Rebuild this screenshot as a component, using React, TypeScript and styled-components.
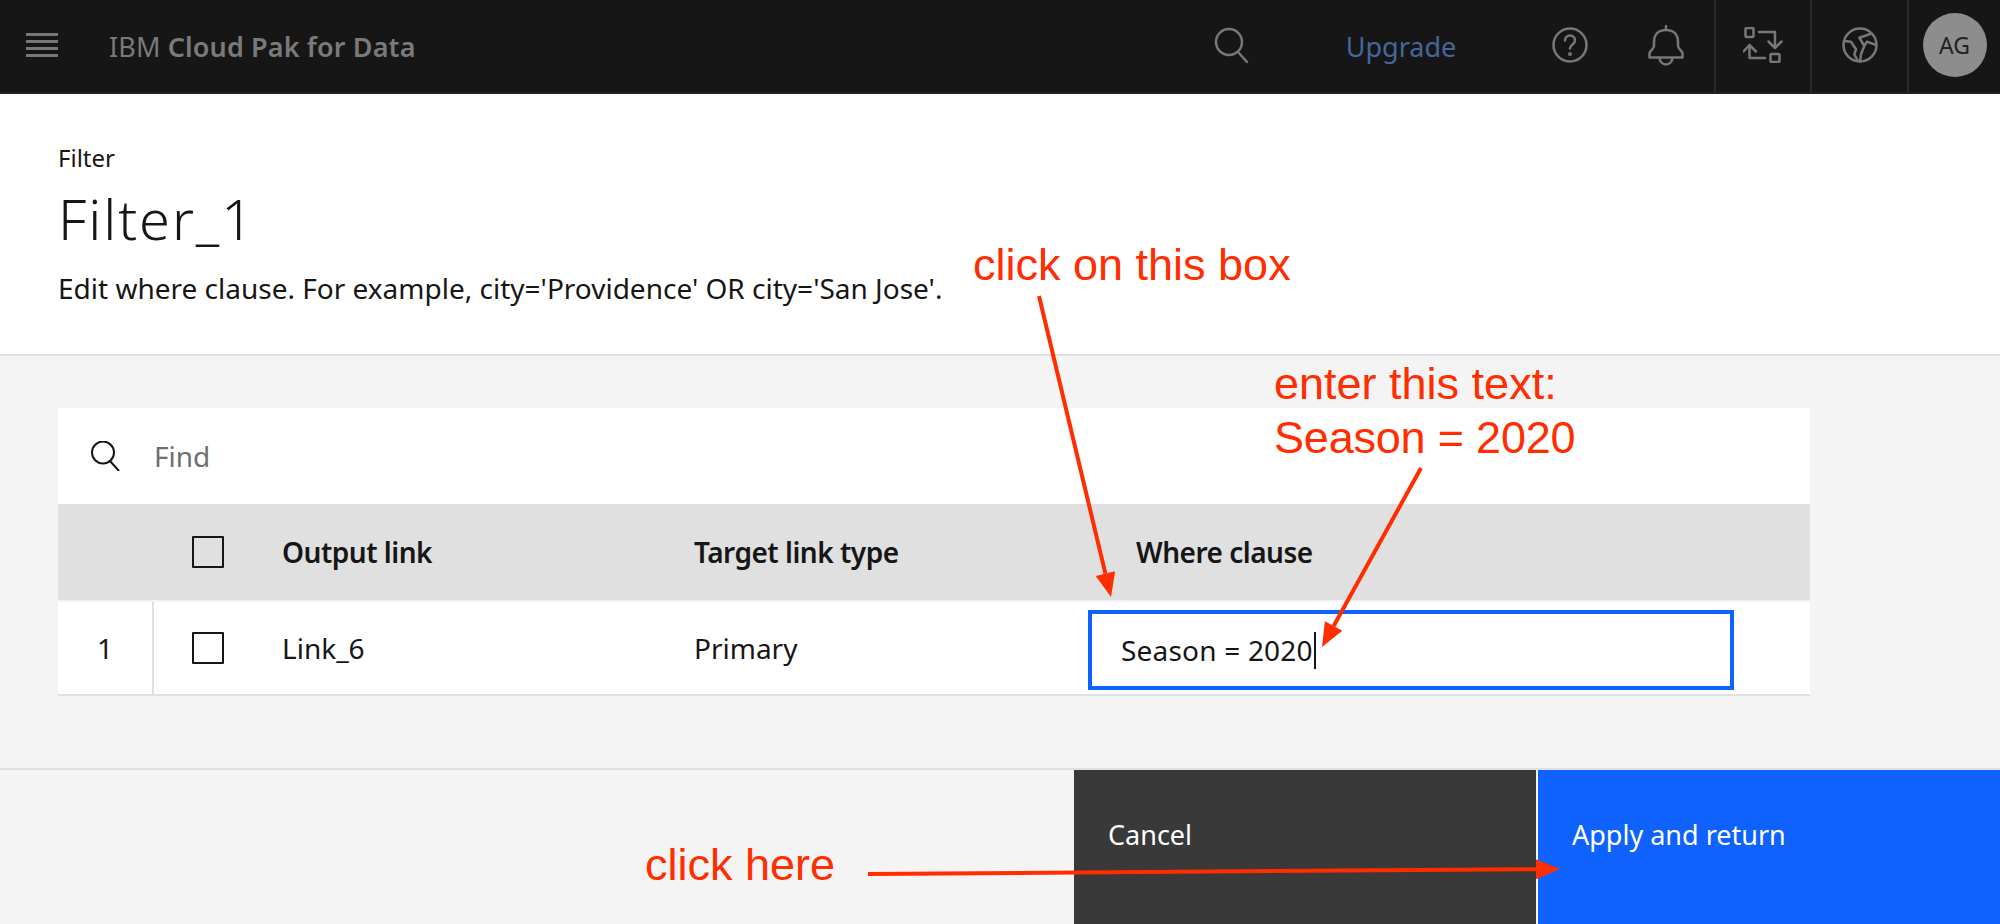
import React from 'react';
import styled, { createGlobalStyle } from 'styled-components';

const Global = createGlobalStyle`
  html, body { margin: 0; padding: 0; background: #fff; }
  * { box-sizing: border-box; }
  body { font-family: "Noto Sans", "Open Sans", sans-serif; color: #161616; }
`;

const Page = styled.div`
  position: relative;
  width: 2000px;
  height: 924px;
  overflow: hidden;
  display: flex;
  flex-direction: column;
`;

const TopBar = styled.header`
  height: 94px;
  flex: none;
  background: #161616;
  border-bottom: 2px solid #222;
  display: flex;
  align-items: center;
`;

const Burger = styled.div`
  margin-left: 26px;
  margin-bottom: 2px;
  width: 32px;
  height: 24px;
  display: flex;
  flex-direction: column;
  justify-content: space-between;
  span { display: block; height: 3px; background: #777; }
`;

const Brand = styled.div`
  margin-left: 51px;
  font-size: 27px;
  letter-spacing: 0.12px;
  color: #7a7a7a;
  white-space: nowrap;
  b { font-weight: 600; }
`;

const TopActions = styled.div`
  margin-left: auto;
  display: flex;
  align-items: stretch;
  height: 92px;
`;

const IconCell = styled.div<{ $w: number; $line?: boolean }>`
  width: ${p => p.$w}px;
  padding-bottom: 2px;
  display: flex;
  align-items: center;
  justify-content: center;
  border-left: ${p => (p.$line ? '2px solid #2a2a2a' : 'none')};
  svg { display: block; }
`;

const Upgrade = styled.div`
  width: 242px;
  display: flex;
  align-items: center;
  justify-content: center;
  font-size: 27px;
  color: #466699;
`;

const Avatar = styled.div`
  width: 64px;
  height: 64px;
  border-radius: 50%;
  background: #8d8d8d;
  color: #222;
  font-size: 23px;
  display: flex;
  align-items: center;
  justify-content: center;
`;

const TitleBlock = styled.section`
  flex: none;
  height: 262px;
  padding: 49px 58px 0;
  background: #fff;
  border-bottom: 2px solid #e0e0e0;
`;

const Eyebrow = styled.div`
  font-size: 24px;
  line-height: 30px;
`;

const Title = styled.h1`
  margin: 9px 0 0;
  font-size: 56px;
  font-weight: 300;
  letter-spacing: 1.9px;
  line-height: 72px;
`;

const Subtitle = styled.p`
  margin: 16px 0 0;
  font-size: 28px;
  line-height: 36px;
`;

const Body = styled.main`
  flex: 1;
  background: #f4f4f4;
  padding: 52px 190px 0 58px;
`;

const SearchRow = styled.div`
  height: 96px;
  background: #fff;
  display: flex;
  align-items: center;
  padding-left: 33px;
  gap: 33px;
  font-size: 28px;
  color: #6f6f6f;
`;

const Row = styled.div<{ $head?: boolean }>`
  display: grid;
  grid-template-columns: 96px 128px 412px 394px 1fr;
  height: ${p => (p.$head ? '96px' : '94px')};
  background: ${p => (p.$head ? '#e0e0e0' : '#fff')};
  font-size: 28px;
  font-weight: ${p => (p.$head ? 600 : 400)};
  letter-spacing: ${p => (p.$head ? '-0.5px' : '0')};
  margin-top: ${p => (p.$head ? 0 : 2)}px;
  border-bottom: ${p => (p.$head ? 'none' : '2px solid #e0e0e0')};
  align-items: center;
`;

const IndexCell = styled.div<{ $line?: boolean }>`
  height: 100%;
  display: flex;
  align-items: center;
  justify-content: center;
  border-right: ${p => (p.$line ? '2px solid #e0e0e0' : 'none')};
`;

const CheckCell = styled.div`
  padding-left: 38px;
`;

const Check = styled.div`
  width: 32px;
  height: 32px;
  border: 2px solid #161616;
  border-radius: 1px;
`;

const HeadWhere = styled.div`
  padding-left: 48px;
`;

const WhereCell = styled.div`
  margin-right: 76px;
  margin-top: 4px;
  height: 80px;
  border: 4px solid #0f62fe;
  background: #fff;
  display: flex;
  align-items: center;
  padding-left: 29px;
  letter-spacing: 0.2px;
`;

const Caret = styled.span`
  display: inline-block;
  width: 2px;
  height: 37px;
  margin-left: 1px;
  background: #161616;
`;

const Footer = styled.footer`
  flex: none;
  height: 156px;
  background: #f4f4f4;
  border-top: 2px solid #e0e0e0;
  display: flex;
  justify-content: flex-end;
`;

const FootButton = styled.div<{ $primary?: boolean }>`
  width: 462px;
  margin-left: ${p => (p.$primary ? 2 : 0)}px;
  background: ${p => (p.$primary ? '#0f62fe' : '#393939')};
  color: #fff;
  font-size: 27px;
  padding: 46px 0 0 34px;
`;

const Note = styled.div<{ $x: number; $y: number; $tight?: boolean }>`
  position: absolute;
  left: ${p => p.$x}px;
  top: ${p => p.$y}px;
  font-family: "Liberation Sans", Arial, sans-serif;
  font-size: 45px;
  line-height: 54px;
  letter-spacing: ${p => (p.$tight ? '-0.2px' : '0')};
  color: #ff2d00;
  white-space: nowrap;
`;

const Arrows = styled.svg`
  position: absolute;
  inset: 0;
  pointer-events: none;
`;

const Stroke = { fill: 'none', stroke: '#777', strokeWidth: 2.5, strokeLinecap: 'round' as const, strokeLinejoin: 'round' as const };

const Arrow = ({ from, to }: { from: [number, number]; to: [number, number] }) => {
  const dx = to[0] - from[0];
  const dy = to[1] - from[1];
  const len = Math.hypot(dx, dy);
  const ux = dx / len;
  const uy = dy / len;
  const bx = to[0] - ux * 24;
  const by = to[1] - uy * 24;
  const px = -uy * 10;
  const py = ux * 10;
  return (
    <g fill="#ff2d00" stroke="none">
      <line x1={from[0]} y1={from[1]} x2={bx} y2={by} stroke="#ff2d00" strokeWidth={4} />
      <polygon points={`${to[0]},${to[1]} ${bx + px},${by + py} ${bx - px},${by - py}`} />
    </g>
  );
};

export default function App() {
  return (
    <Page>
      <Global />
      <TopBar>
        <Burger><span /><span /><span /><span /></Burger>
        <Brand>IBM <b>Cloud Pak for Data</b></Brand>
        <TopActions>
          <IconCell $w={96}>
            <svg width="36" height="36" viewBox="0 0 36 36" {...Stroke}>
              <circle cx="15" cy="15" r="13" />
              <path d="M24 25l9 10" />
            </svg>
          </IconCell>
          <Upgrade>Upgrade</Upgrade>
          <IconCell $w={96}>
            <svg width="38" height="38" viewBox="0 0 38 38" {...Stroke}>
              <circle cx="19" cy="19" r="16.500" />
              <path d="M14 14.500c0-3 2.200-5 5-5s5 2 5 5c0 4-5 4-5 8" />
              <circle cx="19" cy="28" r="0.800" />
            </svg>
          </IconCell>
          <IconCell $w={96}>
            <svg width="36" height="41" viewBox="0 0 36 41" {...Stroke}>
              <path d="M18 1v4M18 5C10 5 6 10 6 17V21C6 24 2 26 1.500 28V32.500H34.500V28C34 26 30 24 30 21V17C30 10 26 5 18 5ZM11.500 32.500c0 4 3 7 6.500 7s6.500-3 6.500-7" />
            </svg>
          </IconCell>
          <IconCell $w={96} $line>
            <svg width="40" height="36" viewBox="0 0 40 36" {...Stroke}>
              <rect x="2.500" y="1" width="8" height="9" rx="1" />
              <rect x="27.500" y="27" width="9" height="8" rx="1" />
              <path d="M16 5H32V21M25.500 14.500L32 21l6.500-6.500M6.500 18V31H22M0.500 24.500L6.500 18l6.500 6.500" />
            </svg>
          </IconCell>
          <IconCell $w={97} $line>
            <svg width="38" height="38" viewBox="0 0 38 38" {...Stroke}>
              <circle cx="19" cy="19" r="16.500" />
              <path d="M3.300 15L10 15.700 15 23.300 13.300 28.300 16.700 34.500M30 7.700L18.300 11.700 23.300 20 20 28.300 19 35.500M23.300 20L26 15.700 35 19" />
            </svg>
          </IconCell>
          <IconCell $w={93} $line>
            <Avatar>AG</Avatar>
          </IconCell>
        </TopActions>
      </TopBar>

      <TitleBlock>
        <Eyebrow>Filter</Eyebrow>
        <Title>Filter_1</Title>
        <Subtitle>Edit where clause. For example, city='Providence' OR city='San Jose'.</Subtitle>
      </TitleBlock>

      <Body>
        <SearchRow>
          <svg width="30" height="30" viewBox="0 0 30 30" fill="none" stroke="#161616" strokeWidth="2">
            <circle cx="12" cy="11.500" r="11" />
            <path d="M19 20l9 10" />
          </svg>
          Find
        </SearchRow>
        <Row $head>
          <IndexCell />
          <CheckCell><Check /></CheckCell>
          <div>Output link</div>
          <div>Target link type</div>
          <HeadWhere>Where clause</HeadWhere>
        </Row>
        <Row>
          <IndexCell $line>1</IndexCell>
          <CheckCell><Check /></CheckCell>
          <div>Link_6</div>
          <div>Primary</div>
          <WhereCell>Season = 2020<Caret /></WhereCell>
        </Row>
      </Body>

      <Footer>
        <FootButton>Cancel</FootButton>
        <FootButton $primary>Apply and return</FootButton>
      </Footer>

      <Note $x={973} $y={238}>click on this box</Note>
      <Note $x={1274} $y={357}>enter this text:</Note>
      <Note $x={1274} $y={411} $tight>Season = 2020</Note>
      <Note $x={645} $y={838}>click here</Note>
      <Arrows width="2000" height="924" viewBox="0 0 2000 924">
        <Arrow from={[1039, 296]} to={[1111, 597]} />
        <Arrow from={[1421, 468]} to={[1322, 647]} />
        <Arrow from={[868, 874]} to={[1560, 869]} />
      </Arrows>
    </Page>
  );
}
